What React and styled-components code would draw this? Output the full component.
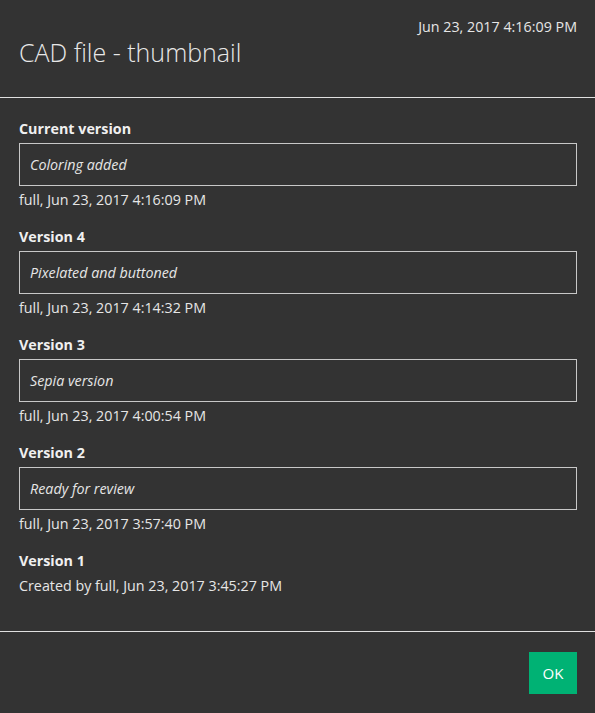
import React from "react";
import styled, { createGlobalStyle } from "styled-components";

const GlobalStyle = createGlobalStyle`
    html, body {
        margin: 0;
        padding: 0;
        background: #333333;
    }
    body {
        font-family: "Open Sans", "Noto Sans", sans-serif;
        color: #e6e6e6;
    }
`;

const Dialog = styled.div`
    width: 595px;
    min-height: 713px;
    background: #333333;
    display: flex;
    flex-direction: column;
`;

const Header = styled.header`
    padding: 17px 18px 29px 19px;
    border-bottom: 1px solid #e0e0e0;
`;

const Stamp = styled.div`
    text-align: right;
    font-size: 14.3px;
    line-height: 20px;
    color: #e6e6e6;
`;

const Title = styled.h1`
    margin: 0;
    font-size: 25px;
    font-weight: 300;
    line-height: 31px;
    color: #e8e8e8;
`;

const Body = styled.section`
    padding: 21px 18px 35px 19px;
    border-bottom: 1px solid #e0e0e0;
`;

const Version = styled.div`
    & + & {
        margin-top: 17px;
    }
`;

const Label = styled.div`
    font-size: 14.3px;
    font-weight: 700;
    line-height: 20px;
    color: #f0f0f0;
`;

const Comment = styled.div`
    margin-top: 4px;
    height: 41px;
    border: 1px solid #c8c8c8;
    padding: 0 10px;
    display: flex;
    align-items: center;
    font-size: 14.3px;
    font-style: italic;
    color: #e6e6e6;
`;

const Meta = styled.div`
    margin-top: ${({ $tight }) => ($tight ? "5px" : "4px")};
    font-size: 14.3px;
    line-height: 20px;
    color: #e6e6e6;
`;

const Footer = styled.footer`
    display: flex;
    justify-content: flex-end;
    padding: 20px 18px 19px 19px;
`;

const OkButton = styled.button`
    width: 48px;
    height: 42px;
    border: none;
    background: #00b274;
    color: #ffffff;
    font-family: inherit;
    font-size: 15px;
    cursor: pointer;
`;

const versions = [
    { label: "Current version", comment: "Coloring added", meta: "full, Jun 23, 2017 4:16:09 PM" },
    { label: "Version 4", comment: "Pixelated and buttoned", meta: "full, Jun 23, 2017 4:14:32 PM" },
    { label: "Version 3", comment: "Sepia version", meta: "full, Jun 23, 2017 4:00:54 PM" },
    { label: "Version 2", comment: "Ready for review", meta: "full, Jun 23, 2017 3:57:40 PM" },
    { label: "Version 1", meta: "Created by full, Jun 23, 2017 3:45:27 PM" },
];

function App() {
    return (
        <Dialog>
            <GlobalStyle />
            <Header>
                <Stamp>Jun 23, 2017 4:16:09 PM</Stamp>
                <Title>CAD file - thumbnail</Title>
            </Header>
            <Body>
                {versions.map(v => (
                    <Version key={v.label}>
                        <Label>{v.label}</Label>
                        {v.comment && <Comment>{v.comment}</Comment>}
                        <Meta $tight={!v.comment}>{v.meta}</Meta>
                    </Version>
                ))}
            </Body>
            <Footer>
                <OkButton>OK</OkButton>
            </Footer>
        </Dialog>
    );
}

export default App;
